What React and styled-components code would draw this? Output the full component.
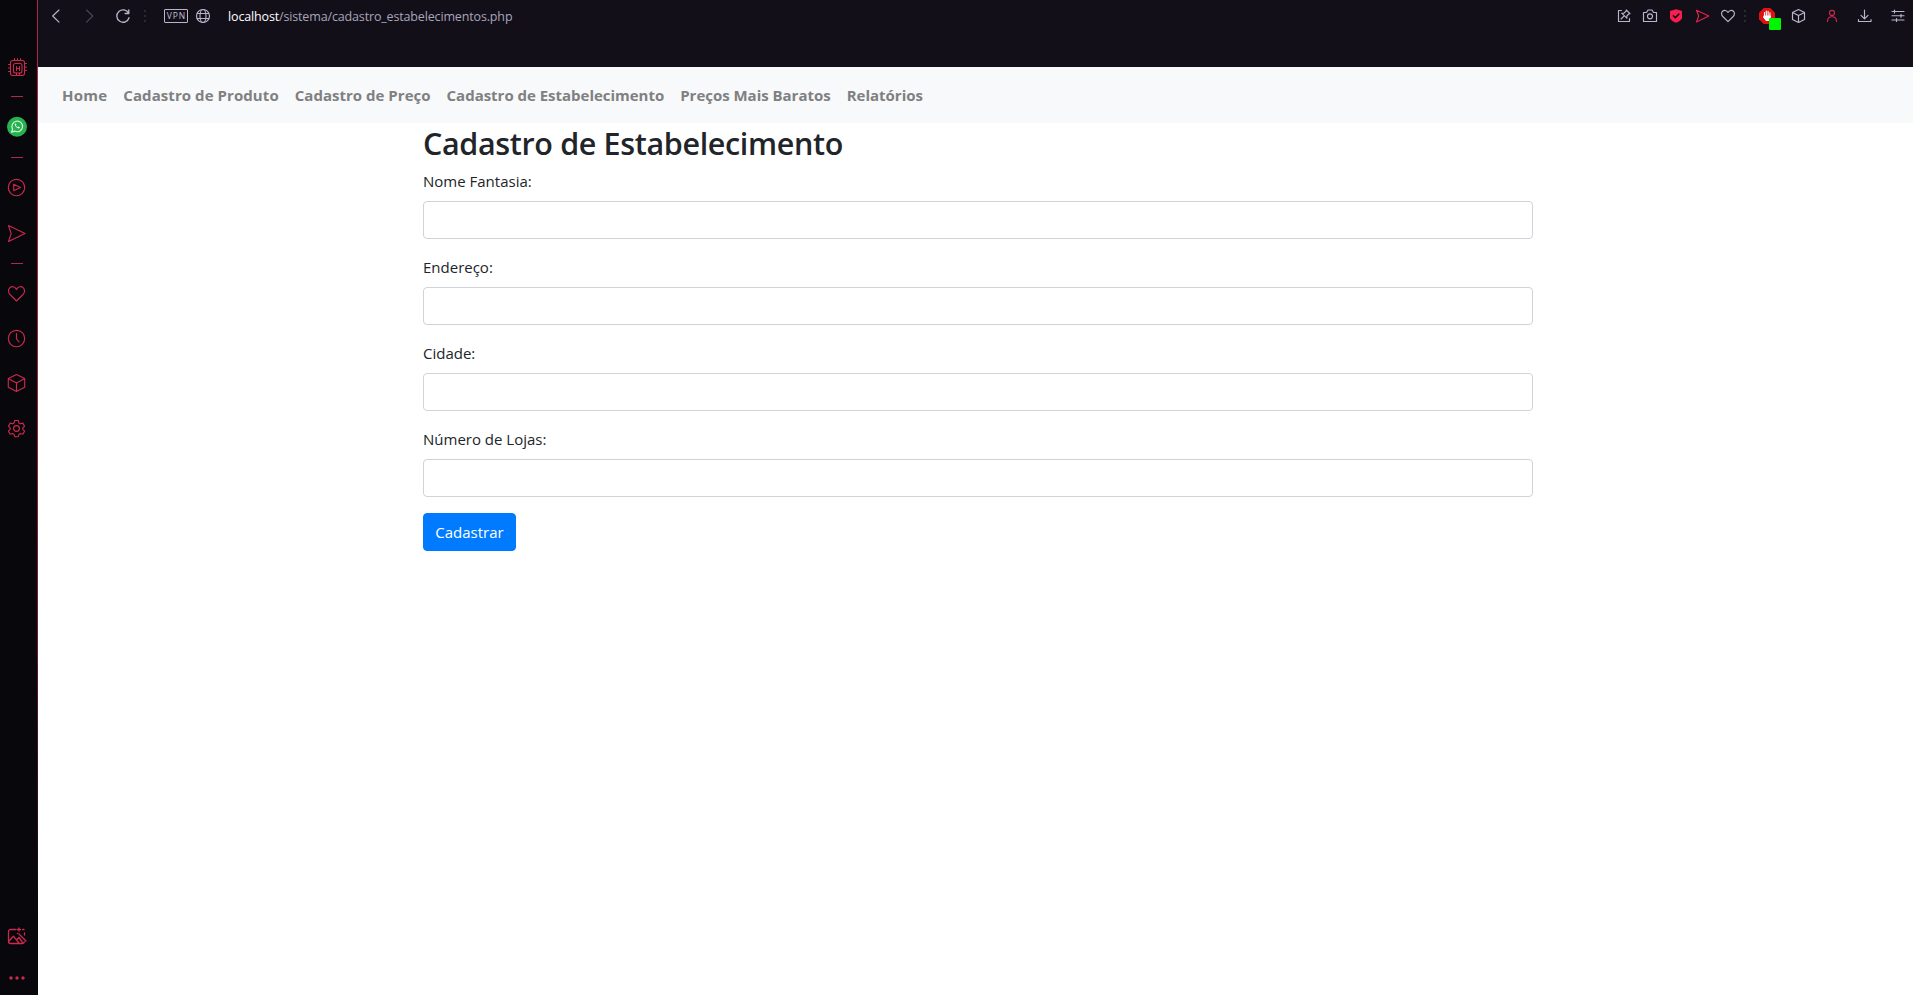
import React from "react";
import styled, { createGlobalStyle } from "styled-components";

const GlobalStyle = createGlobalStyle`
  *, *::before, *::after { box-sizing: border-box; }
  body {
    margin: 0;
    background: #fff;
    color: #212529;
    font: 400 16px/1.5 "Open Sans", "Noto Sans", sans-serif;
    overflow: hidden;
  }
`;

const Browser = styled.div`
  display: flex;
  width: 100vw;
  height: 100vh;
`;

const Sidebar = styled.aside`
  flex: none;
  display: flex;
  flex-direction: column;
  width: 38px;
  padding: 57px 0 7px 7px;
  background:
    linear-gradient(#b02644, #a02340 40%, #6b1a30 65%, #08070c 92%) right / 1px 100% no-repeat,
    #08070c;
`;

const Divider = styled.span`
  flex: none;
  width: 12px;
  height: 1px;
  margin: ${(p) => p.$top}px 0 0 4px;
  background: #b32747;
`;

const Glyph = styled.svg`
  flex: none;
  display: block;
  overflow: visible;
  fill: none;
  stroke: currentColor;
  stroke-width: ${(p) => p.$weight || 1.15};
  stroke-linecap: round;
  stroke-linejoin: round;
`;

const SideGlyph = styled(Glyph).attrs({ width: 20, height: 20, viewBox: "0 0 20 20" })`
  margin-top: ${(p) => (p.$push ? "auto" : `${p.$top || 0}px`)};
  color: #c92a4d;
`;

const BarGlyph = styled(Glyph).attrs({ width: 16, height: 16, viewBox: "0 0 16 16" })`
  margin-left: ${(p) => p.$left || 0}px;
  color: ${(p) => p.$color || "#b9b5cb"};
`;

const Main = styled.div`
  flex: 1;
  min-width: 0;
  display: flex;
  flex-direction: column;
`;

const AddressBar = styled.header`
  flex: none;
  display: flex;
  align-items: flex-start;
  height: 67px;
  padding: 8px 7px 0 10px;
  background: #120f19;
`;

const Grip = styled.span`
  flex: none;
  width: 2px;
  height: 12px;
  margin: 2px 0 0 ${(p) => p.$left}px;
  background: repeating-linear-gradient(#2c2935 0 2px, transparent 2px 5px);
`;

const VpnBadge = styled.span`
  flex: none;
  width: 24px;
  height: 14px;
  margin: 1px 0 0 18px;
  border: 1px solid #b9b5cb;
  border-radius: 1px;
  color: #c3bfd3;
  font: 500 8.5px/12px "Open Sans", sans-serif;
  letter-spacing: 0.9px;
  text-indent: 1px;
  text-align: center;
`;

const Address = styled.span`
  margin: 0 auto 0 17px;
  color: #a9a5b9;
  font-size: 12.5px;
  line-height: 17px;
  white-space: nowrap;
  letter-spacing: -0.15px;
`;

const Host = styled.span`
  color: #fff;
`;

const Blocker = styled.span`
  position: relative;
  flex: none;
  margin-left: 13px;
`;

const Counter = styled.span`
  position: absolute;
  left: 10px;
  top: 10px;
  width: 12px;
  height: 12px;
  border-radius: 1px;
  background: #00f500;
`;

const Navbar = styled.nav`
  flex: none;
  display: flex;
  align-items: center;
  height: 56px;
  padding: 8px 16px;
  background: #f8f9fa;
`;

const NavLink = styled.a`
  padding: 8px;
  color: #7f8081;
  font-weight: 700;
  white-space: nowrap;
  text-decoration: none;
  font-size: 15px;
  line-height: 24px;
  letter-spacing: ${(p) => p.$track || 0}px;
`;

const Container = styled.main`
  width: 1110px;
  margin-left: 385px;
`;

const Title = styled.h2`
  margin: 0 0 7.4px;
  padding-top: 1px;
  font-size: 30.5px;
  font-weight: 600;
  line-height: 38px;
  white-space: nowrap;
  letter-spacing: -0.35px;
`;

const Field = styled.div`
  margin-bottom: 16px;
`;

const Label = styled.label`
  display: block;
  width: max-content;
  margin-bottom: 8px;
  font-size: 15px;
  line-height: 24px;
`;

const Input = styled.input`
  display: block;
  width: 100%;
  height: 38px;
  padding: 6px 12px;
  border: 1px solid #ced4da;
  border-radius: 4px;
  background: #fff;
  font: inherit;
`;

const Submit = styled.button`
  width: 93px;
  height: 38px;
  padding: 0;
  border: 1px solid #007bff;
  border-radius: 4px;
  background: #007bff;
  color: #fff;
  font: inherit;
  font-size: 15px;
  line-height: 24px;
`;

const links = [
  { text: "Home", track: 0.25 },
  { text: "Cadastro de Produto", track: 0.07 },
  { text: "Cadastro de Preço", track: 0.02 },
  { text: "Cadastro de Estabelecimento", track: -0.02 },
  { text: "Preços Mais Baratos", track: -0.02 },
  { text: "Relatórios" },
];

const fields = [
  { id: "nome", text: "Nome Fantasia:" },
  { id: "endereco", text: "Endereço:" },
  { id: "cidade", text: "Cidade:" },
  { id: "lojas", text: "Número de Lojas:" },
];

function SideIcons() {
  return (
    <>
      <SideGlyph $weight={1.1}>
        <rect x="3.5" y="3.5" width="14" height="15" rx="2.2" />
        <rect x="6.5" y="6.5" width="8.5" height="9.5" rx="2" />
        <path d="M9.5 9.5v4M12.5 9.5v4M9.5 11.5h3M7.5 3V1.5M10.5 3V1.5M13.5 3V1.5M3 7.5H1.5M3 11H1.5M3 14.5H1.5M18 6.5h1.5M18 10h1.5M18 13.5h1.5M9.5 16v2M12.5 16v2" />
      </SideGlyph>
      <Divider $top={19} />
      <SideGlyph $top={20}>
        <circle cx="10" cy="9.7" r="10" fill="#25b24f" stroke="none" />
        <path d="m4.6 15.2 1-3.2a5.3 5.3 0 1 1 2.1 2.1z" stroke="#d9f7df" />
        <path d="M8.1 6.8c-1.4 1.3 2.9 6 4.6 4.2l.2-.8-1.6-.8-.8.7c-.7-.3-1.3-.9-1.6-1.6l.6-.7-.6-1.4z" fill="#e8fbec" stroke="none" />
      </SideGlyph>
      <Divider $top={20} />
      <SideGlyph $top={20}>
        <circle cx="9.5" cy="9.5" r="8.2" />
        <path d="M6.7 6.3v6.4l6.8-3.2z" />
      </SideGlyph>
      <SideGlyph $top={26}>
        <path d="M1.5 1.6 18 9.6 1.5 17.5 4.2 9.6z" />
      </SideGlyph>
      <Divider $top={19} />
      <SideGlyph $top={20}>
        <path d="M9.5 17 3 10.5C1 8.4 1 5.4 2.7 3.8c2-1.9 5.2-1.3 6.8 1.7 1.6-3 4.8-3.6 6.8-1.7 1.7 1.6 1.7 4.6-.3 6.7z" />
      </SideGlyph>
      <SideGlyph $top={25}>
        <circle cx="9.5" cy="9.5" r="8.2" />
        <path d="M9.5 4.5v5.3l2.6 3.2" />
      </SideGlyph>
      <SideGlyph $top={24}>
        <path d="M9.5 1.5 17.7 5.6v8.6l-8.2 4.3-8.2-4.3V5.6zM1.3 5.6l8.2 4.3 8.2-4.3M9.5 9.9v8.6" />
      </SideGlyph>
      <SideGlyph $top={26}>
        <circle cx="9.5" cy="9.5" r="2.9" />
        <path d="M7.7 1.5h3.6l.6 2.4 1.5.9 2.4-.7 1.8 3.1-1.8 1.7v1.5l1.8 1.7-1.8 3.1-2.4-.7-1.5.9-.6 2.3H7.7l-.6-2.3-1.5-.9-2.4.7-1.8-3.1 1.8-1.7V8.9L1.4 7.2l1.8-3.1 2.4.7 1.5-.9z" />
      </SideGlyph>
      <SideGlyph $push $weight={1.3}>
        <path d="M9 2.5H3.5a2 2 0 0 0-2 2v10a2 2 0 0 0 2 2h12a2 2 0 0 0 2-1.6M2 14l4.5-4.8 5 6.3M9.5 13l2.5-2.5 4 5.5M12 7l7 7M12 1v3M10.5 2.5h3M17 2.5h-1.5M17.5 6v2M10.5 6.5h.1" />
      </SideGlyph>
      <SideGlyph $top={21}>
        <g fill="currentColor" stroke="none">
          <circle cx="4" cy="10" r="1.7" />
          <circle cx="10" cy="10" r="1.7" />
          <circle cx="16" cy="10" r="1.7" />
        </g>
      </SideGlyph>
    </>
  );
}

function Toolbar() {
  return (
    <AddressBar>
      <BarGlyph><path d="M11 2 4.7 8l6.3 6.2" /></BarGlyph>
      <BarGlyph $left={18} $color="#4a4655"><path d="M4.5 2 10.8 8l-6.3 6.2" /></BarGlyph>
      <BarGlyph $left={17} $weight={1.3}><path d="M13.6 5.3A6.2 6.2 0 1 0 14 9.7M13.8 1.8v3.7h-3.7" /></BarGlyph>
      <Grip $left={13} />
      <VpnBadge>VPN</VpnBadge>
      <BarGlyph $left={7}>
        <circle cx="8" cy="8" r="6.5" />
        <ellipse cx="8" cy="8" rx="3" ry="6.5" />
        <path d="M2.3 5.5h11.4M2.3 10.5h11.4" />
      </BarGlyph>
      <Address><Host>localhost</Host>/sistema/cadastro_estabelecimentos.php</Address>
      <BarGlyph>
        <path d="M5.5 2.5h-3v11h11v-3M5 11l2.7-2.7M10.3 2l3.7 3.7-1.3.3-1.8 1.9-.1 2.3L5.7 5.2 8 5.1 10 3.3z" />
      </BarGlyph>
      <BarGlyph $left={10}>
        <path d="M1.5 4.5h3l1.5-2.5h4l1.5 2.5h3v9h-13z" />
        <circle cx="8" cy="8.3" r="2.5" />
      </BarGlyph>
      <BarGlyph $left={10} $color="#fa1e4e">
        <path d="M8 1.3 14 3v6.2c0 2.6-3 4.5-6 5.5-3-1-6-2.9-6-5.5V3z" fill="currentColor" stroke="none" />
        <path d="m5.3 7.7 2 2 3.6-3.6" stroke="#120f19" strokeWidth="1.6" />
      </BarGlyph>
      <BarGlyph $left={11} $color="#e3264e"><path d="M1.5 2.3 13.8 8 1.5 13.9 3.7 8z" /></BarGlyph>
      <BarGlyph $left={9}>
        <path d="M8 13.6 2.8 8.5C1.2 6.8 1.2 4.5 2.6 3.2c1.5-1.3 4-.9 5.4 1.3 1.4-2.2 3.9-2.6 5.4-1.3 1.4 1.3 1.4 3.6-.2 5.3z" />
      </BarGlyph>
      <Grip $left={8} />
      <Blocker>
        <BarGlyph>
          <path d="M4.7 0h6.6L16 4.7v6.6L11.3 16H4.7L0 11.3V4.7z" fill="#dc1310" stroke="none" />
          <path d="M5.5 8V4.5M7.3 7.5V3M9.1 7.5V3.3M10.9 8V4.8M5 8h6.5l-1 4.5H7.3L4.5 9" fill="#fff" stroke="#fff" />
        </BarGlyph>
        <Counter />
      </Blocker>
      <BarGlyph $left={15} $weight={1.2}>
        <path d="M8.5 1.5 14.5 4.5v7l-6 3-6-3v-7zM2.5 4.5l6 3 6-3M8.5 7.5v7" />
      </BarGlyph>
      <BarGlyph $left={18} $color="#c92a4d">
        <circle cx="8" cy="4.9" r="2.5" />
        <path d="M3.5 13.5c0-6.3 9-6.3 9 0" />
      </BarGlyph>
      <BarGlyph $left={17}><path d="M7.5 2v8.500M4 7.300l3.500 3.500L11 7.300M1.500 11.500v2h12.500v-2" /></BarGlyph>
      <BarGlyph $left={17}>
        <path d="M2 3.500h12M2 7.700h12M2 12h12M4.500 2v3M11 6.200v3M6.500 10.500v3" />
      </BarGlyph>
    </AddressBar>
  );
}

export default function App() {
  return (
    <>
      <GlobalStyle />
      <Browser>
        <Sidebar><SideIcons /></Sidebar>
        <Main>
          <Toolbar />
          <Navbar>
            {links.map((l) => <NavLink key={l.text} $track={l.track}>{l.text}</NavLink>)}
          </Navbar>
          <Container>
            <Title>Cadastro de Estabelecimento</Title>
            {fields.map((f) => (
              <Field key={f.id}>
                <Label htmlFor={f.id}>{f.text}</Label>
                <Input id={f.id} />
              </Field>
            ))}
            <Submit>Cadastrar</Submit>
          </Container>
        </Main>
      </Browser>
    </>
  );
}
